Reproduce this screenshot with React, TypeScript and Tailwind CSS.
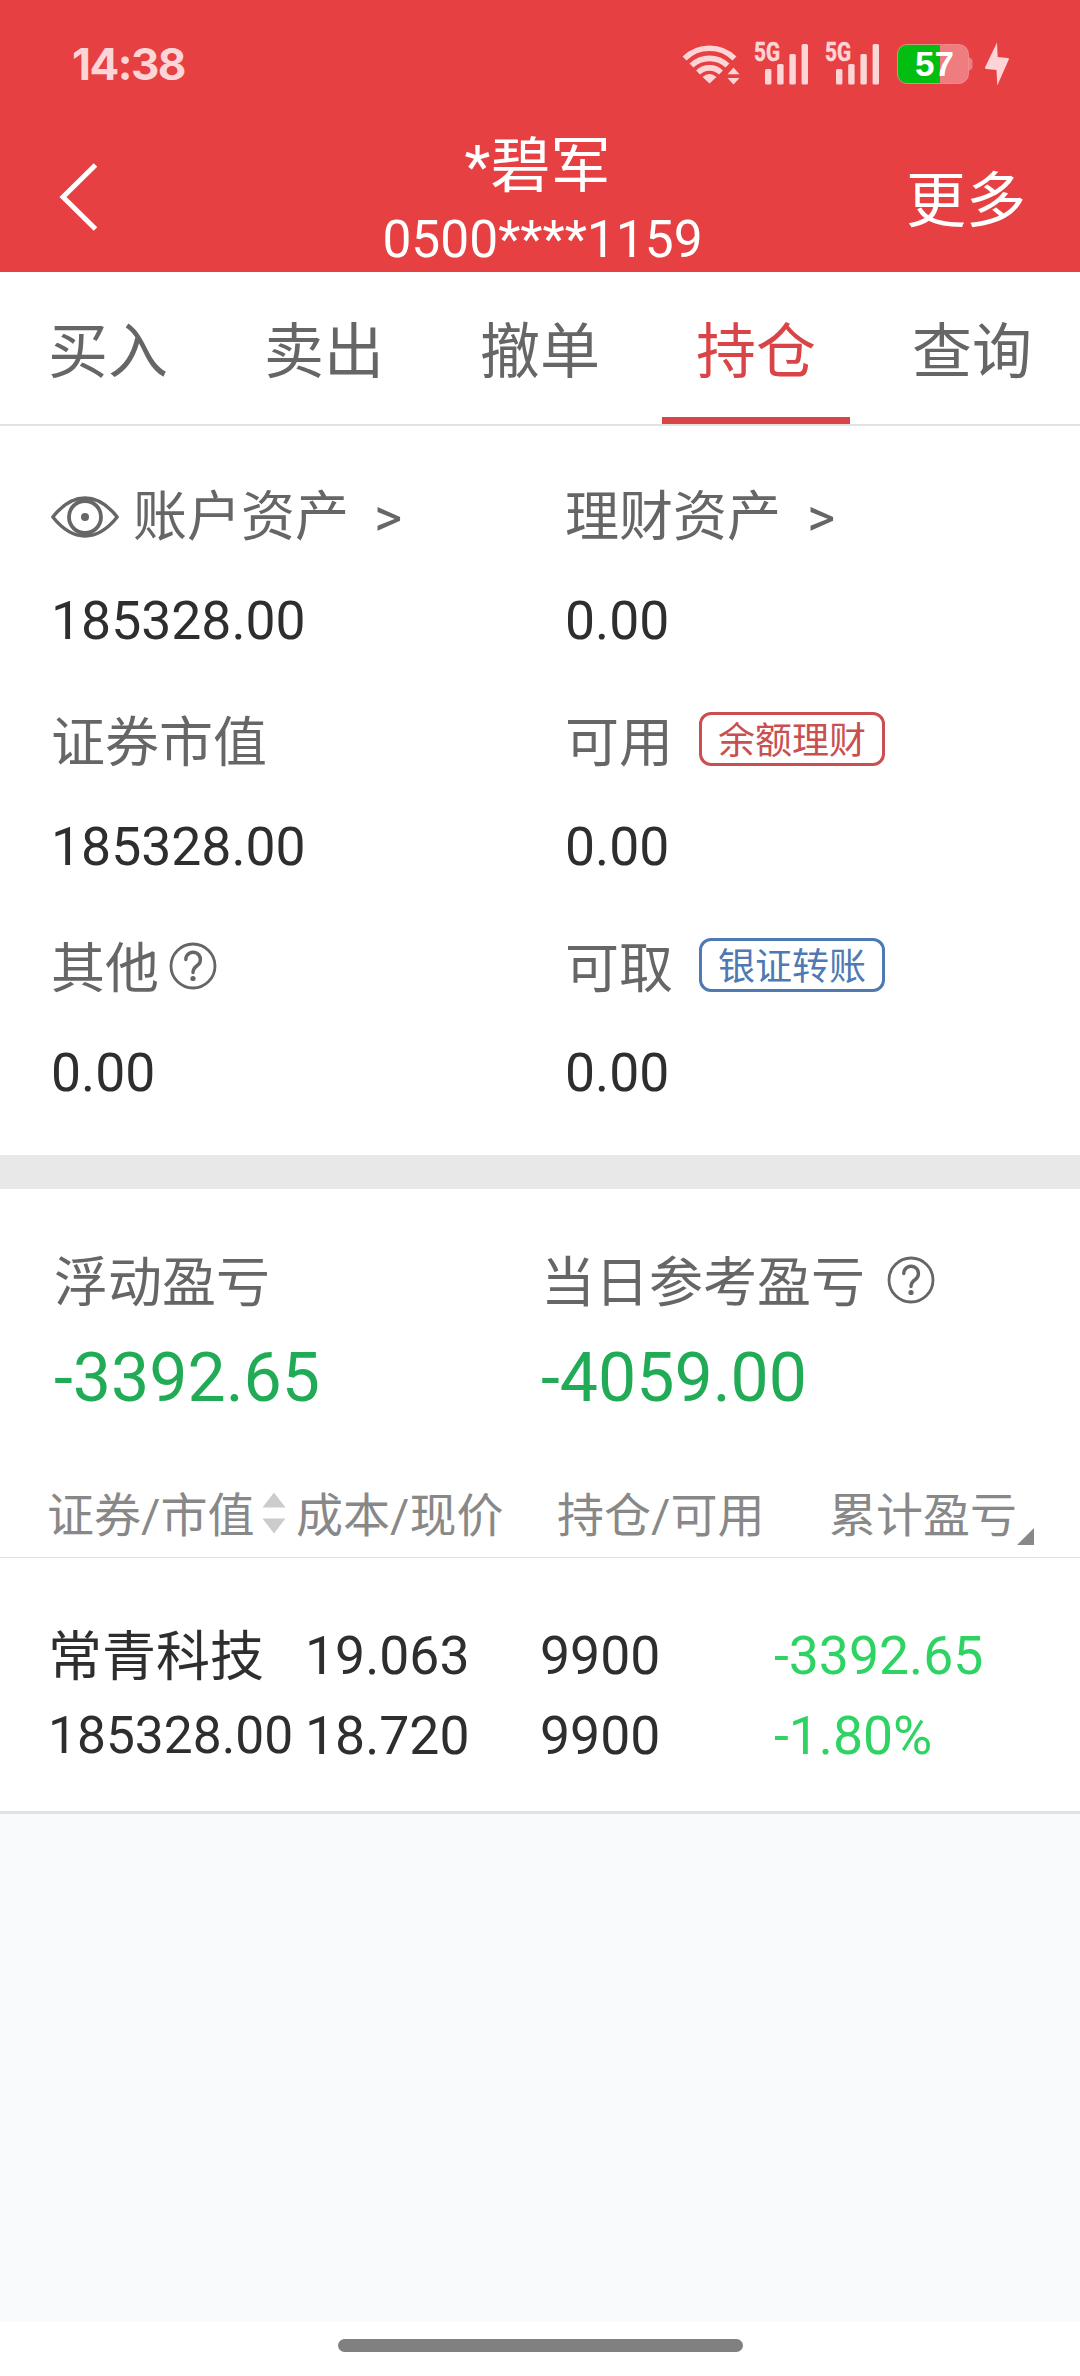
import type { ReactNode } from "react";

/* Icons */
function WifiIcon() {
  return (
    <svg width="58" height="44" viewBox="0 0 58 44" fill="none" stroke="#fdd5d6" strokeWidth="5.6">
      <path d="M2.5 16.5A35.5 35.5 0 0 1 52.500 16.500" />
      <path d="M9.5 23.600A26 26 0 0 1 45.500 23.600" />
      <path d="M16 30.500A16.500 16.500 0 0 1 39 30.500" />
      <path d="M27.500 41.500L20.500 35Q27.500 29 34.500 35Z" fill="#fdd5d6" stroke="none" />
      <path d="M45.500 32.200L51.500 25.500L57.500 32.200ZM45.500 36L51.500 42.500L57.500 36Z" fill="#fdd5d6" stroke="none" />
    </svg>
  );
}

function SignalIcon() {
  return (
    <svg width="56" height="60" viewBox="0 -8 56 60" fill="#fdd5d6">
      <text
        x="0"
        y="19"
        fontSize="25"
        fontWeight="700"
        fontFamily="Roboto, sans-serif"
        textLength="26"
        lengthAdjust="spacingAndGlyphs"
        stroke="#fdd5d6"
        strokeWidth="0.600"
      >
        5G
      </text>
      <rect x="11" y="27" width="6.400" height="15.500" rx="1.500" />
      <rect x="23.200" y="22" width="6.400" height="20.500" rx="1.500" />
      <rect x="35.400" y="12" width="6.400" height="30.500" rx="1.500" />
      <rect x="47.600" y="2" width="6.400" height="40.500" rx="1.500" />
    </svg>
  );
}

function BatteryIcon() {
  return (
    <svg width="76" height="40" viewBox="0 0 76 40">
      <path d="M71 13.500H73L75.500 16V24L73 26.500H71Z" fill="#ef7c7f" />
      <rect x="0.500" y="0.500" width="71" height="39" rx="9.500" fill="#ef7c7f" />
      <path d="M43 0.500H10A9.500 9.500 0 0 0 0.500 10V30A9.500 9.500 0 0 0 10 39.500H43Z" fill="#04bd11" />
      <rect x="0.500" y="0.500" width="71" height="39" rx="9.500" fill="none" stroke="#f29a9c" strokeOpacity="0.700" />
      <text
        x="37.500"
        y="32.300"
        fontSize="35"
        fontWeight="700"
        fontFamily="Liberation Sans, sans-serif"
        textAnchor="middle"
        fill="#fff"
      >
        57
      </text>
    </svg>
  );
}

function BoltIcon() {
  return (
    <svg width="24" height="44" viewBox="0 0 24 44" fill="#fdd5d6">
      <path d="M12 0.500L0 25.500Q-0.200 27 1.500 27L11.500 28L12.300 43.500L24 17Q24 16 22.500 16L12.700 15Z" />
    </svg>
  );
}

function EyeIcon() {
  return (
    <svg width="68" height="42" viewBox="0 0 68 42" fill="none" stroke="#666" strokeWidth="3.400">
      <path d="M1.800 21Q17 2 34 2T66.200 21Q51 40 34 40T1.800 21Z" strokeLinejoin="round" />
      <circle cx="34" cy="21" r="16" strokeWidth="3.800" />
      <circle cx="34" cy="21" r="4" fill="#666" stroke="none" />
    </svg>
  );
}

function HelpIcon() {
  return (
    <svg width="48" height="48" viewBox="0 0 48 48" fill="none" stroke="#666" strokeLinecap="round">
      <circle cx="24" cy="24" r="22" strokeWidth="2.800" />
      <path d="M16.800 17.500A7.300 7.300 0 1 1 28.300 23.500Q24 26.500 24 30.500" strokeWidth="3.400" />
      <circle cx="24" cy="36.500" r="2.600" fill="#666" stroke="none" />
    </svg>
  );
}

const tabs = ["买入", "卖出", "撤单", "持仓", "查询"];

const assets: { label: string; value: string; before?: ReactNode; after?: ReactNode }[] = [
  {
    label: "账户资产",
    value: "185328.00",
    before: <span className="mr-3.5 -mt-0.5"><EyeIcon /></span>,
    after: <span className="ml-[25px]">&gt;</span>,
  },
  { label: "理财资产", value: "0.00", after: <span className="ml-[26px]">&gt;</span> },
  { label: "证券市值", value: "185328.00" },
  {
    label: "可用",
    value: "0.00",
    after: (
      <span className="ml-[26px] mb-2.5 flex h-[54px] w-[186px] items-center justify-center rounded-xl border-3 border-[#c94f51] pt-1 text-[37px] leading-none text-[#c94f51]">
        余额理财
      </span>
    ),
  },
  {
    label: "其他",
    value: "0.00",
    after: <span className="ml-2.5 mb-2"><HelpIcon /></span>,
  },
  {
    label: "可取",
    value: "0.00",
    after: (
      <span className="ml-[26px] mb-2.5 flex h-[54px] w-[186px] items-center justify-center rounded-xl border-3 border-[#4f79b3] pt-1 text-[37px] leading-none text-[#4f79b3]">
        银证转账
      </span>
    ),
  },
];

export default function App() {
  return (
    <div className="flex h-[2376px] w-[1080px] flex-col overflow-hidden whitespace-nowrap bg-white font-[Roboto,'Noto_Sans_CJK_SC',sans-serif] text-[54px] leading-none text-[#2e2e2e]">
      {/* Header */}
      <header className="h-[272px] shrink-0 bg-[#e64042] text-white">
        <div className="flex h-[127px] items-center justify-between pl-[72px] pr-[71px]">
          <span className="font-[Inter,sans-serif] text-[44px] font-bold tracking-[-1.5px] text-[#fdd5d6]">
            14:38
          </span>
          <div className="flex items-center">
            <WifiIcon />
            <span className="ml-[14px]"><SignalIcon /></span>
            <span className="ml-[15px]"><SignalIcon /></span>
            <span className="ml-4"><BatteryIcon /></span>
            <span className="ml-3"><BoltIcon /></span>
          </div>
        </div>
        <div className="flex h-[145px] items-center">
          <div className="flex-1 pl-[59px]">
            <svg width="40" height="68" viewBox="0 0 40 68" className="-mt-1.5" fill="none" stroke="#fff" strokeWidth="5">
              <path d="M36.500 2L4 34L36.500 66" />
            </svg>
          </div>
          <div className="flex flex-col items-center pt-0.5 text-center">
            <h1 className="mr-2.5 h-[76px] text-[60px] leading-[76px]">*碧军</h1>
            <p className="h-[67px] text-[51.5px] leading-[69px]">0500****1159</p>
          </div>
          <div className="flex-1 pr-[54px] pt-1 text-right text-[60px]">更多</div>
        </div>
      </header>

      {/* Tabs */}
      <nav className="flex h-[154px] shrink-0 border-b-2 border-[#e2e2e2] text-[60px]">
        {tabs.map((tab) => (
          <div
            key={tab}
            className={
              tab === "持仓"
                ? "flex w-[216px] flex-col items-center text-[#d94547]"
                : "flex w-[216px] flex-col items-center text-[#666]"
            }
          >
            <span className="h-[145px] pt-4 leading-[130px]">{tab}</span>
            {tab === "持仓" && <span className="h-[7px] w-[188px] bg-[#d94547]" />}
          </div>
        ))}
      </nav>

      {/* Account assets */}
      <section className="grid h-[729px] shrink-0 auto-rows-[226px] grid-cols-[514px_1fr] pl-[51px] pt-[38px]">
        {assets.map((item) => (
          <div key={item.label}>
            <div className="flex h-[108px] items-center text-[#666]">
              {item.before}
              <span>{item.label}</span>
              {item.after}
            </div>
            <div className="flex h-[97px] items-center text-[53.5px]">{item.value}</div>
          </div>
        ))}
      </section>

      <div className="h-[34px] shrink-0 bg-[#e8e8e8]" />

      {/* Profit and loss */}
      <section className="flex h-[286px] shrink-0 pl-[54px] pt-12">
        <div className="w-[487px]">
          <div className="flex h-[94px] items-center text-[#666]">浮动盈亏</div>
          <div className="flex h-[94px] items-center text-[68px] text-[#22ab56]">-3392.65</div>
        </div>
        <div>
          <div className="flex h-[94px] items-center text-[#666]">
            当日参考盈亏
            <span className="ml-[22px] mb-2"><HelpIcon /></span>
          </div>
          <div className="flex h-[94px] items-center text-[68px] text-[#22ab56]">-4059.00</div>
        </div>
      </section>

      {/* Positions */}
      <div className="flex h-[83px] shrink-0 items-center border-b border-[#e2e2e2] pb-0.5 pl-[47px] text-[47px] text-[#888]">
        <div className="flex w-[249px] items-center">
          证券/市值
          <svg width="24" height="42" viewBox="0 0 24 42" fill="#ccc" className="-mt-1 ml-2">
            <path d="M0.500 15.500L12 0.500L23.500 15.500ZM0.500 26.500L12 41.500L23.500 26.500Z" />
          </svg>
        </div>
        <div className="w-[261px]">成本/现价</div>
        <div className="w-[272px]">持仓/可用</div>
        <div className="flex items-end">
          累计盈亏
          <svg width="17" height="17" viewBox="0 0 17 17" fill="#888" className="-mb-1.5">
            <path d="M17 0V17H0Z" />
          </svg>
        </div>
      </div>
      <div className="flex h-[256px] shrink-0 border-b-3 border-[#e2e2e2] pl-12 pt-[58px] leading-[80px]">
        <div className="w-[257px]">
          <div className="h-20 leading-[84px]">常青科技</div>
          <div className="text-[51.5px]">185328.00</div>
        </div>
        <div className="w-[235px] text-[53.5px]">
          <div>19.063</div>
          <div>18.720</div>
        </div>
        <div className="w-[234px] text-[53.5px]">
          <div>9900</div>
          <div>9900</div>
        </div>
        <div className="text-[53.5px] text-[#2fd363]">
          <div>-3392.65</div>
          <div>-1.80%</div>
        </div>
      </div>

      <div className="flex-1 bg-[#f8fafc]" />

      {/* Home indicator */}
      <div className="flex h-[54px] shrink-0 justify-center bg-white pt-[17px]">
        <div className="h-[13px] w-[405px] rounded-full bg-[#808080]" />
      </div>
    </div>
  );
}
